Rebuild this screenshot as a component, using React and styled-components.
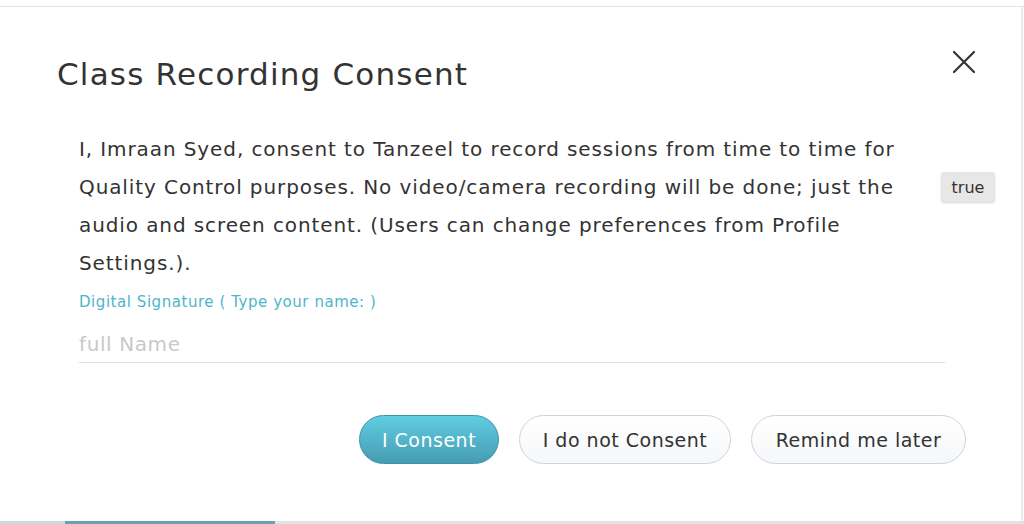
import React from "react";
import styled, { createGlobalStyle } from "styled-components";

const FONT = `"DejaVu Sans", "Open Sans", sans-serif`;

const Global = createGlobalStyle`
  html, body { margin: 0; padding: 0; background: #ffffff; }
  body { font-family: ${FONT}; color: #333; }
  * { box-sizing: border-box; }
`;

const Page = styled.div`
  width: 1024px;
  height: 524px;
  display: flex;
  flex-direction: column;
  overflow: hidden;
  background: #fff;
`;

const TopEdge = styled.div`
  height: 7px;
  flex: none;
  border-bottom: 1px solid #e3e3e9;
  background: #fff;
`;

const Dialog = styled.div`
  flex: 1;
  display: flex;
  flex-direction: column;
  background: #fff;
  border-right: 2px solid #ececef;
  margin-right: 1px;
  position: relative;
`;

const Header = styled.div`
  display: flex;
  justify-content: space-between;
  align-items: flex-start;
  padding: 46px 44px 0 57px;
`;

const Title = styled.h1`
  margin: 0;
  font-family: ${FONT};
  font-weight: 400;
  font-size: 31px;
  letter-spacing: 1.2px;
  line-height: 42px;
  color: #333;
`;

const CloseButton = styled.button`
  border: 0;
  background: none;
  padding: 0;
  margin-top: -4px;
  width: 26px;
  height: 26px;
  cursor: pointer;
  display: flex;
  align-items: center;
  justify-content: center;
`;

const Body = styled.div`
  padding: 35px 0 0 79px;
  display: flex;
  flex-direction: column;
`;

const Text = styled.p`
  margin: 0;
  width: 856px;
  font-size: 20px;
  letter-spacing: 0.9px;
  line-height: 38px;
  color: #333;
`;

const Badge = styled.span`
  position: absolute;
  left: 941px;
  top: 165px;
  width: 54px;
  height: 30px;
  display: flex;
  align-items: center;
  justify-content: center;
  background: #e7e7e7;
  border-radius: 3px;
  box-shadow: 0 1px 2px rgba(0,0,0,0.18);
  font-size: 16px;
  color: #333;
`;

const Label = styled.label`
  margin-top: 10px;
  font-size: 15px;
  letter-spacing: 0.55px;
  line-height: 20px;
  color: #4fb5ca;
`;

const NameInput = styled.input`
  margin-top: 14px;
  width: 866px;
  border: 0;
  border-bottom: 1px solid #dddddd;
  padding: 4px 0 4px 0;
  font-family: ${FONT};
  font-size: 20px;
  letter-spacing: 0.6px;
  line-height: 28px;
  color: #333;
  outline: none;
  background: transparent;
  &::placeholder { color: #c9c9c9; }
`;

const Actions = styled.div`
  display: flex;
  justify-content: flex-end;
  gap: 20px;
  padding: 52px 55px 0 0;
`;

const Button = styled.button`
  height: 49px;
  width: ${p => p.$w}px;
  border-radius: 25px;
  font-family: ${FONT};
  font-size: 19px;
  letter-spacing: 0.5px;
  cursor: pointer;
  padding: 0;
  ${p => p.$primary ? `
    color: #fff;
    border: 1px solid #3f93a8;
    background: linear-gradient(#60cde2, #469cb1);
  ` : `
    color: #333;
    border: 1px solid #cfd3dc;
    background: linear-gradient(#ffffff, #f6f7f9);
  `}
`;

const BottomStrip = styled.div`
  height: 3px;
  flex: none;
  display: flex;
  background: #ddd;
`;

const StripPart = styled.div`
  width: ${p => p.$w}px;
  background: ${p => p.$c};
`;

const CloseIcon = () => (
  <svg width="24" height="24" viewBox="0 0 24 24">
    <path d="M2 2 L22 22 M22 2 L2 22" stroke="#333" strokeWidth="2.2" strokeLinecap="round" />
  </svg>
);

export default function App() {
  return (
    <>
      <Global />
      <Page>
        <TopEdge />
        <Dialog>
          <Header>
            <Title>Class Recording Consent</Title>
            <CloseButton aria-label="close"><CloseIcon /></CloseButton>
          </Header>
          <Body>
            <Text>
              I, Imraan Syed, consent to Tanzeel to record sessions from time to time for Quality Control purposes. No video/camera recording will be done; just the audio and screen content. (Users can change preferences from Profile Settings.).
            </Text>
            <Label>Digital Signature ( Type your name: )</Label>
            <NameInput placeholder="full Name" />
          </Body>
          <Actions>
            <Button $primary $w={140}>I Consent</Button>
            <Button $w={212}>I do not Consent</Button>
            <Button $w={215}>Remind me later</Button>
          </Actions>
          <Badge>true</Badge>
        </Dialog>
        <BottomStrip>
          <StripPart $w={65} $c="#cfd8de" />
          <StripPart $w={210} $c="#6f9db3" />
          <StripPart $w={749} $c="#e2e2e2" />
        </BottomStrip>
      </Page>
    </>
  );
}
